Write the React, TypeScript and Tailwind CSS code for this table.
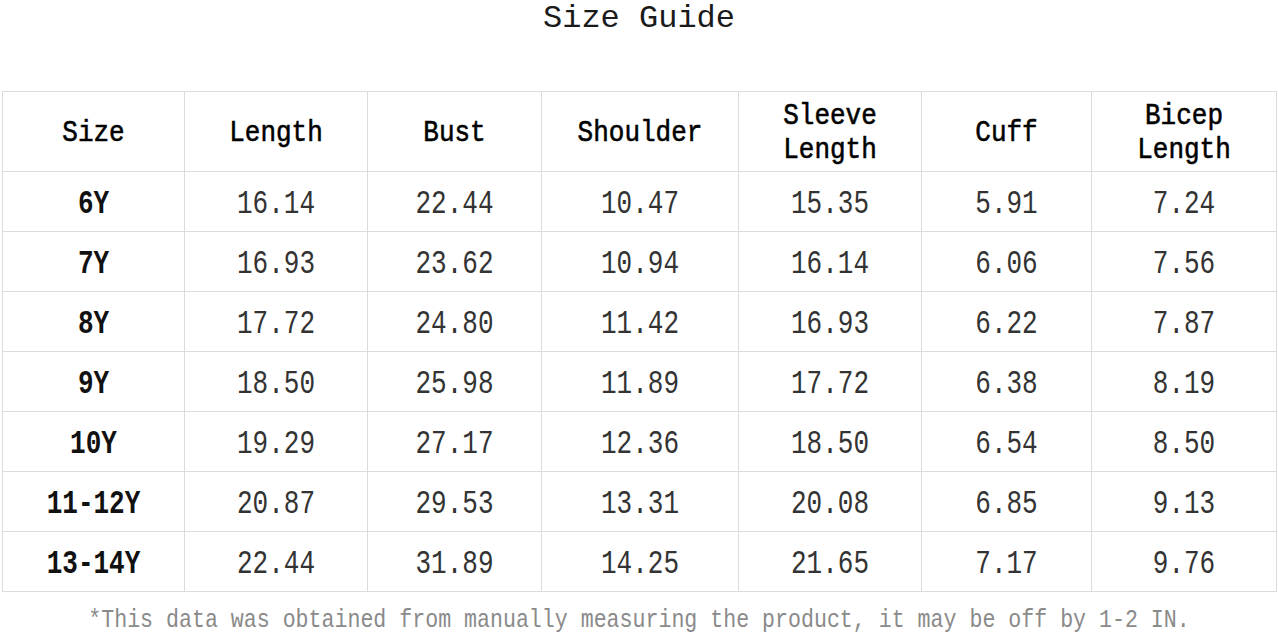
import React from 'react';

const headers = ['Size', 'Length', 'Bust', 'Shoulder', 'Sleeve Length', 'Cuff', 'Bicep Length'];

const rows: string[][] = [
  ['6Y', '16.14', '22.44', '10.47', '15.35', '5.91', '7.24'],
  ['7Y', '16.93', '23.62', '10.94', '16.14', '6.06', '7.56'],
  ['8Y', '17.72', '24.80', '11.42', '16.93', '6.22', '7.87'],
  ['9Y', '18.50', '25.98', '11.89', '17.72', '6.38', '8.19'],
  ['10Y', '19.29', '27.17', '12.36', '18.50', '6.54', '8.50'],
  ['11-12Y', '20.87', '29.53', '13.31', '20.08', '6.85', '9.13'],
  ['13-14Y', '22.44', '31.89', '14.25', '21.65', '7.17', '9.76'],
];

const colWidths = ['w-[182px]', 'w-[183px]', 'w-[174px]', 'w-[197px]', 'w-[183px]', 'w-[170px]', 'w-[185px]'];

const font = "font-['Liberation_Mono','Noto_Sans_CJK_SC',monospace]";

const App: React.FC = () => {
  return (
    <div className={`w-[1278px] h-[633px] bg-white overflow-hidden ${font}`}>
      <h1 className="h-[38px] flex items-center justify-center text-[32px] font-normal text-[#1a1a1a]">
        <span className="leading-[32px]">Size Guide</span>
      </h1>

      <table className="mt-[53px] ml-[2px] w-[1274px] table-fixed border-collapse">
        <colgroup>
          {colWidths.map((w, i) => (
            <col key={i} className={w} />
          ))}
        </colgroup>
        <thead>
          <tr className="h-[80px]">
            {headers.map((h) => (
              <th
                key={h}
                className="border border-[#dcdcdc] pt-[3px] px-2 text-center align-middle text-[26px] font-normal text-black [-webkit-text-stroke:0.5px_#000]"
              >
                <div className="flex flex-col items-center gap-[1px]">
                  {h.split(' ').map((word) => (
                    <span key={word} className="block h-[33px] leading-[33px] scale-y-[1.15]">
                      {word}
                    </span>
                  ))}
                </div>
              </th>
            ))}
          </tr>
        </thead>
        <tbody>
          {rows.map((row) => (
            <tr key={row[0]} className="h-[60px]">
              {row.map((cell, i) => (
                <td
                  key={i}
                  className={`border border-[#dcdcdc] pt-[5px] text-center align-middle text-[26px] ${
                    i === 0 ? 'font-bold text-[#111]' : 'text-[#333]'
                  }`}
                >
                  <span className="inline-block leading-[26px] scale-y-[1.25]">{cell}</span>
                </td>
              ))}
            </tr>
          ))}
        </tbody>
      </table>

      <p className="mt-[14px] h-[28px] flex items-center justify-center text-[21.6px] text-[#8a8a8a]">
        <span className="inline-block leading-[22px] scale-y-[1.2]">
          *This data was obtained from manually measuring the product, it may be off by 1-2 IN.
        </span>
      </p>
    </div>
  );
};

export default App;
